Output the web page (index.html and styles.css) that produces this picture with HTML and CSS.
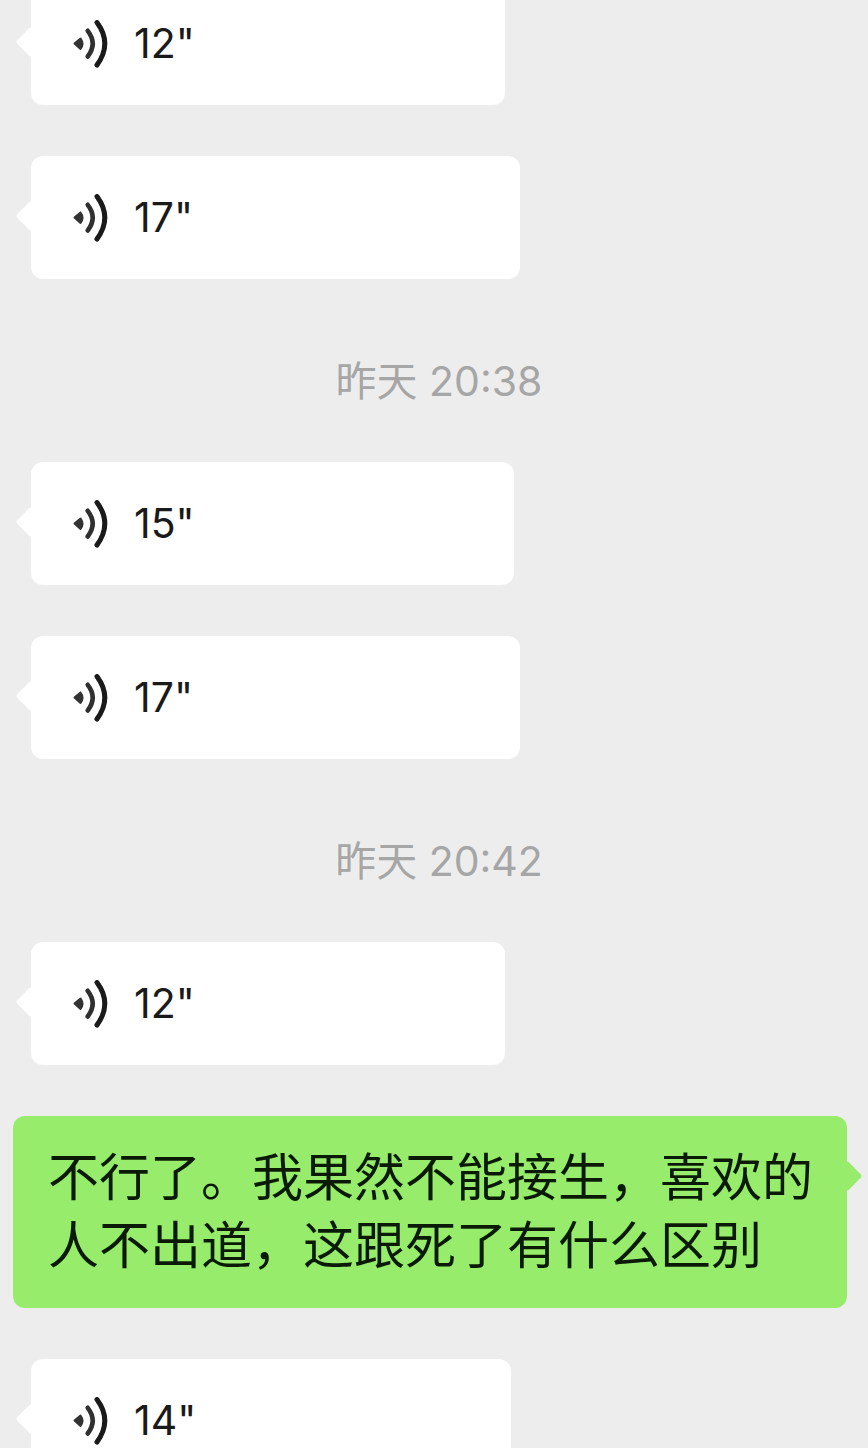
FILE: index.html
```html
<!DOCTYPE html>
<html lang="zh-CN">
<head>
<meta charset="utf-8">
<meta name="viewport" content="width=device-width, initial-scale=1">
<title>聊天</title>
<link rel="stylesheet" href="styles.css">
</head>
<body>
<svg class="defs" aria-hidden="true">
  <symbol id="voice" viewBox="0 0 36 48">
    <path d="M1.500 23.500 L7.500 18.500 Q11.500 23.500 7.500 29 Z" fill="#333" stroke="#333" stroke-width="2" stroke-linejoin="round"/>
    <path d="M14.700 10.800 Q24.700 23.500 14.700 36.500" fill="none" stroke="#303030" stroke-width="4.600" stroke-linecap="round"/>
    <path d="M24 2.500 Q39.600 23.500 24 45" fill="none" stroke="#1a1a1a" stroke-width="5" stroke-linecap="round"/>
  </symbol>
</svg>
<main class="chat">
  <button class="bubble voice len-12"><svg class="icon" aria-hidden="true"><use href="#voice"/></svg><span>12"</span></button>
  <button class="bubble voice len-17"><svg class="icon" aria-hidden="true"><use href="#voice"/></svg><span>17"</span></button>
  <time class="stamp">昨天 20:38</time>
  <button class="bubble voice len-15"><svg class="icon" aria-hidden="true"><use href="#voice"/></svg><span>15"</span></button>
  <button class="bubble voice len-17"><svg class="icon" aria-hidden="true"><use href="#voice"/></svg><span>17"</span></button>
  <time class="stamp">昨天 20:42</time>
  <button class="bubble voice len-12"><svg class="icon" aria-hidden="true"><use href="#voice"/></svg><span>12"</span></button>
  <p class="bubble sent">不行了。我果然不能接生，喜欢的人不出道，这跟死了有什么区别</p>
  <button class="bubble voice len-14"><svg class="icon" aria-hidden="true"><use href="#voice"/></svg><span>14"</span></button>
</main>
</body>
</html>
```
FILE: styles.css
```css
* {
  box-sizing: border-box;
}

body {
  margin: 0;
  height: 100vh;
  overflow: hidden;
  background: #ededed;
  font-family: Inter, "Noto Sans CJK SC", sans-serif;
}

.defs {
  position: absolute;
  width: 0;
  height: 0;
}

.chat {
  display: flex;
  flex-direction: column;
  align-items: flex-start;
  gap: 51px;
  margin-top: -18px;
  padding: 0 21px 0 13px;
}

.bubble {
  position: relative;
  border-radius: 12px;
}

.bubble::before {
  content: "";
  position: absolute;
  width: 22px;
  height: 22px;
  border-radius: 3px;
  transform: rotate(45deg);
  background: inherit;
}

.voice {
  display: flex;
  align-items: center;
  gap: 25px;
  margin: 0 0 0 18px;
  padding: 36px 42px;
  border: 0;
  background: #fff;
  color: #1a1a1a;
  font-family: inherit;
  font-size: 41px;
  line-height: 51px;
  text-align: left;
}

.voice::before {
  left: -11px;
  top: 49px;
}

.icon {
  width: 36px;
  height: 48px;
}

.len-12 { width: 474px; }
.len-14 { width: 480px; }
.len-15 { width: 483px; }
.len-17 { width: 489px; }

.stamp {
  align-self: center;
  margin-left: 18px;
  padding: 24px 0 2px;
  color: #a6a6a6;
  font-size: 41px;
  line-height: 55px;
}

.sent {
  align-self: stretch;
  margin: 0;
  padding: 28px 30px 28px 35px;
  background: #98ec6b;
  color: #0a1a05;
  font-size: 51px;
  line-height: 68px;
}

.sent::before {
  right: -11px;
  top: 49px;
}
```
